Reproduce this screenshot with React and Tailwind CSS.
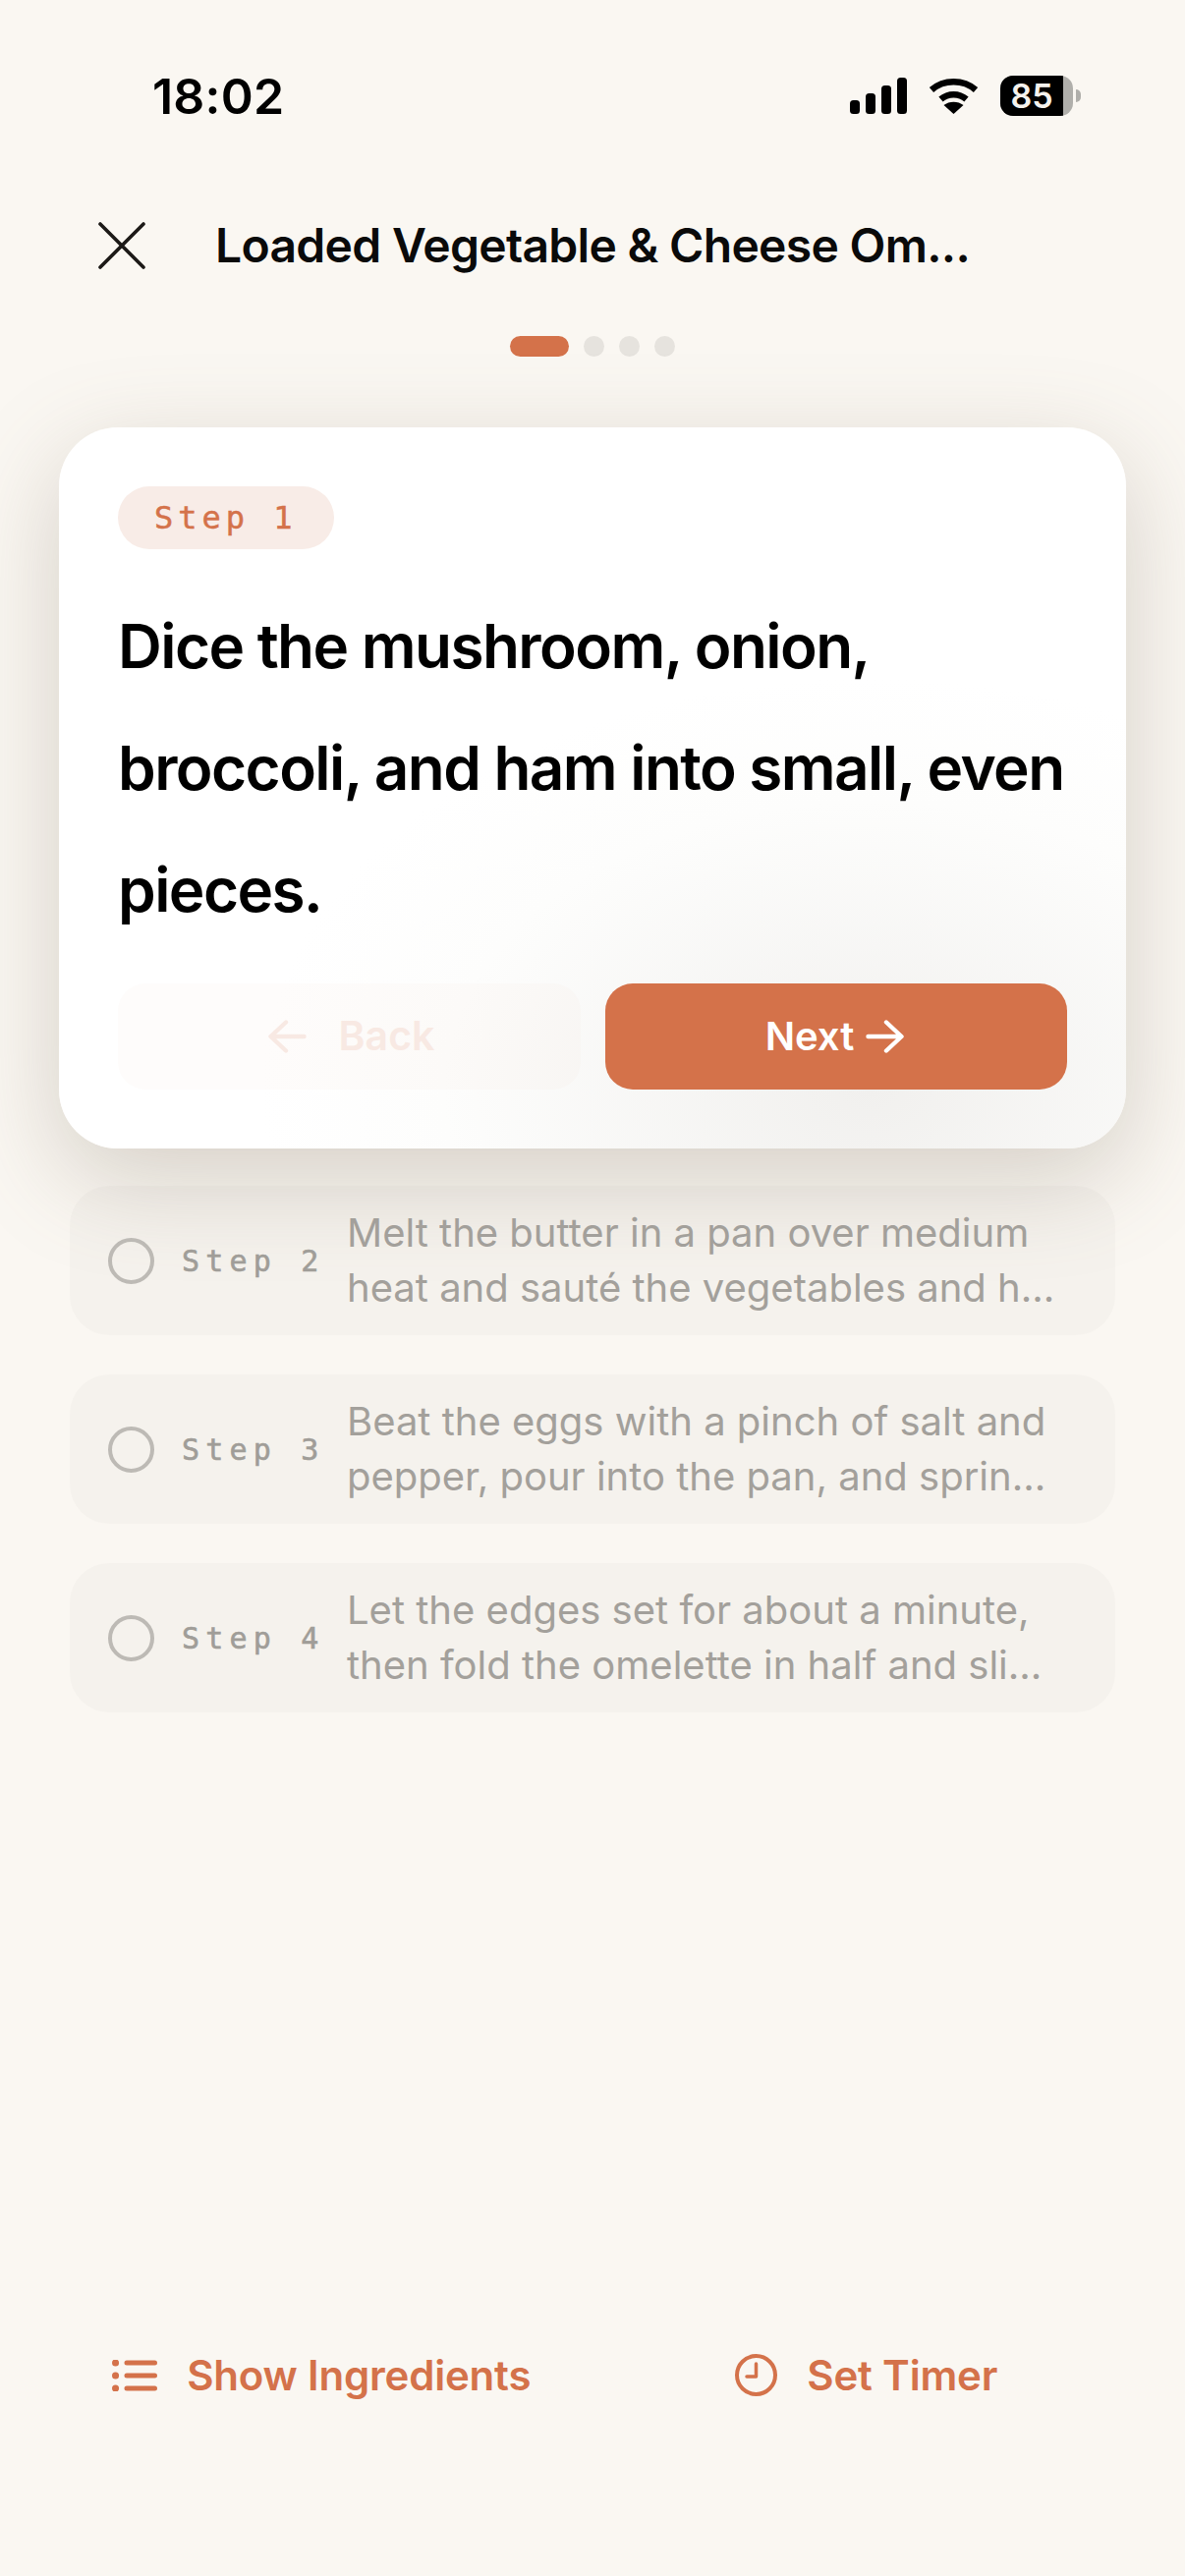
const steps = [
  { label: "Step 2", lines: ["Melt the butter in a pan over medium", "heat and sauté the vegetables and h..."] },
  { label: "Step 3", lines: ["Beat the eggs with a pinch of salt and", "pepper, pour into the pan, and sprin..."] },
  { label: "Step 4", lines: ["Let the edges set for about a minute,", "then fold the omelette in half and sli..."] },
];

function StatusBar() {
  return (
    <div className="flex h-[41px] items-center justify-between pl-[155px] pr-[106px]">
      <span className="text-[50px] font-semibold leading-none tracking-[0.2px] text-black">18:02</span>
      <div className="flex items-center">
        <svg width="58" height="37" viewBox="0 0 58 37" className="mr-[22px]" fill="#000">
          <rect x="0" y="23" width="10" height="14" rx="3.5" />
          <rect x="16" y="16" width="10" height="21" rx="3.5" />
          <rect x="32" y="8" width="10" height="29" rx="3.5" />
          <rect x="48" y="0" width="10" height="37" rx="3.5" />
        </svg>
        <svg width="51" height="36" viewBox="0 0 51 36" className="mr-[22px]" fill="none">
          <path d="M3 11.5C15.5 0.5 35.5 0.5 48 11.5" stroke="#000" strokeWidth="6.5" />
          <path d="M12.5 21C20 14.5 31 14.5 38.5 21" stroke="#000" strokeWidth="6.5" />
          <path d="M25.5 36L15.5 27C21 22.5 30 22.5 35.5 27Z" fill="#000" />
        </svg>
        <div className="flex items-center">
          <div className="relative h-[41px] w-[74px] overflow-hidden rounded-[13px] bg-[#b0afab]">
            <div className="h-full w-[64px] bg-black" />
            <span className="absolute inset-0 flex items-center justify-center pr-[10px] text-[34px] font-semibold leading-none text-[#f5f2ed]">85</span>
          </div>
          <div className="ml-[3px] h-[13px] w-[5px] rounded-r-full bg-[#b0afab]" />
        </div>
      </div>
    </div>
  );
}

function Arrow({ className }) {
  return (
    <svg width="39" height="34" viewBox="0 0 39 34" fill="none" stroke="currentColor" strokeWidth="4.4" strokeLinecap="round" strokeLinejoin="round" className={className}>
      <path d="M2.5 17H36M21 2.5L36.5 17L21 31.5" />
    </svg>
  );
}

function StepRow({ label, lines }) {
  return (
    <div className="flex h-[152px] items-center rounded-[40px] bg-black/[0.02] pl-[39px]">
      <div className="h-[47px] w-[47px] shrink-0 rounded-full border-[4px] border-[#bdbab5]" />
      <span className="ml-[28px] w-[168px] shrink-0 whitespace-nowrap font-['DejaVu_Sans_Mono',monospace] text-[30px] tracking-[6.2px] text-[#a09d98] [-webkit-text-stroke:0.6px_#a09d98]">{label}</span>
      <p className="whitespace-nowrap text-[40px] leading-[56px] text-[#a3a09b]">
        {lines[0]}
        <br />
        {lines[1]}
      </p>
    </div>
  );
}

export default function App() {
  return (
    <div className="flex h-[2622px] w-[1206px] flex-col overflow-hidden bg-[#faf7f2] pt-[77px] font-['Inter',sans-serif]">
      <StatusBar />

      {/* Header */}
      <div className="mt-[108px] flex h-[48px] items-center pl-[100px]">
        <svg width="48" height="48" viewBox="0 0 48 48" fill="none" stroke="#1c1917" strokeWidth="3.6" strokeLinecap="round">
          <path d="M2 2L46 46M46 2L2 46" />
        </svg>
        <h1 className="ml-[71px] text-[48px] font-[560] leading-none tracking-[-0.7px] text-[#0a0a0a]">Loaded Vegetable &amp; Cheese Om...</h1>
      </div>

      {/* Progress dots */}
      <div className="mt-[68px] flex justify-center gap-[15px]">
        <div className="h-[21px] w-[60px] rounded-full bg-[#d4724a]" />
        <div className="h-[21px] w-[21px] rounded-full bg-[#e6e3de]" />
        <div className="h-[21px] w-[21px] rounded-full bg-[#e6e3de]" />
        <div className="h-[21px] w-[21px] rounded-full bg-[#e6e3de]" />
      </div>

      {/* Current step card */}
      <div className="mx-[60px] mt-[72px] flex h-[734px] flex-col rounded-[60px] bg-[radial-gradient(ellipse_620px_420px_at_76%_92%,#f1f0ee,#fdfdfc_70%,#ffffff)] p-[60px] shadow-[0_30px_100px_rgba(120,105,85,0.28)]">
        <span className="self-start rounded-full bg-[#f8ece7] px-[37px] py-[13px] font-['DejaVu_Sans_Mono',monospace] text-[32px] leading-[38px] tracking-[5px] text-[#d4724a] [-webkit-text-stroke:0.5px_#d4724a]">Step 1</span>
        <p className="mt-[37px] text-[62px] font-[570] leading-[124px] tracking-[-1.55px] text-black">Dice the mushroom, onion, broccoli, and ham into small, even pieces.</p>
        <div className="mt-[33px] flex gap-[25px]">
          <button className="flex h-[108px] flex-1 items-center justify-center gap-[33px] rounded-[28px] bg-[#d4724a]/[0.02] pl-[4px] text-[41px] font-semibold text-[#f8e9e3]">
            <Arrow className="rotate-180" />
            Back
          </button>
          <button className="flex h-[108px] flex-1 items-center justify-center gap-[12px] rounded-[28px] bg-[#d4724a] pr-[3px] text-[40px] font-semibold text-white">
            Next
            <Arrow />
          </button>
        </div>
      </div>

      {/* Upcoming steps */}
      <div className="mx-[71px] mt-[38px] flex flex-col gap-[40px]">
        {steps.map((s) => (
          <StepRow key={s.label} label={s.label} lines={s.lines} />
        ))}
      </div>

      {/* Bottom actions */}
      <div className="mt-auto mb-[173px] grid grid-cols-2 pl-[50px] pr-[47px] text-[42px] font-semibold tracking-[-0.2px] text-[#d4724a]">
        <div className="flex items-center justify-center gap-[30px]">
          <svg width="46" height="32" viewBox="0 0 46 32" fill="none" stroke="#d4724a" strokeWidth="5" strokeLinecap="round">
            <path d="M15 3H43.5M15 16H43.5M15 29H43.5" />
            <path d="M3.5 3H3.6M3.5 16H3.6M3.5 29H3.6" strokeWidth="7" />
          </svg>
          Show Ingredients
        </div>
        <div className="flex items-center justify-center gap-[30px]">
          <svg width="43" height="43" viewBox="0 0 43 43" fill="none" stroke="#d4724a" strokeWidth="4" strokeLinecap="round" strokeLinejoin="round">
            <circle cx="21.5" cy="21.5" r="19.5" />
            <path d="M21.5 10V23H12" strokeWidth="3.5" />
          </svg>
          Set Timer
        </div>
      </div>
    </div>
  );
}
